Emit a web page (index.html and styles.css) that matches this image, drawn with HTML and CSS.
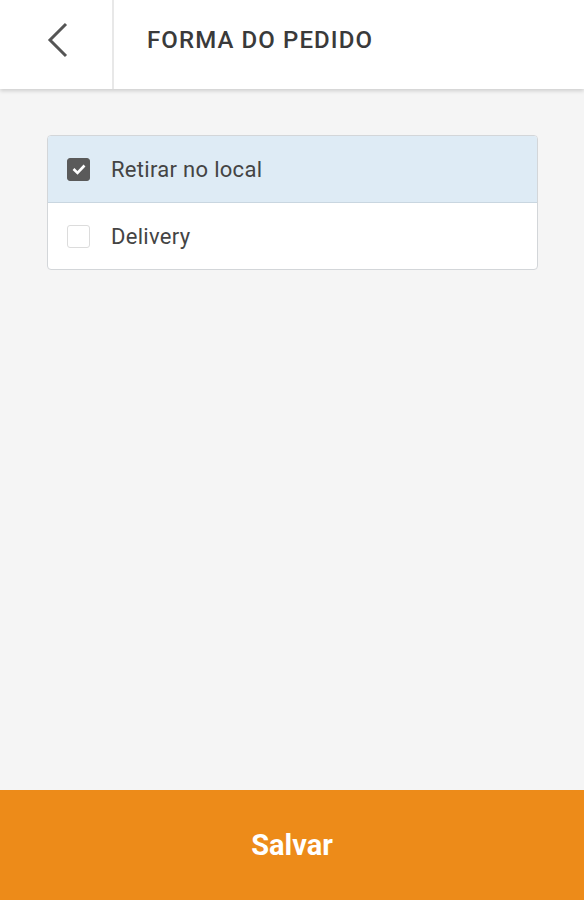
FILE: index.html
```html
<!DOCTYPE html>
<html lang="pt">
<head>
<meta charset="utf-8">
<link rel="stylesheet" href="styles.css">
</head>
<body>
<div class="app">
  <header class="topbar">
    <div class="back">
      <svg width="24" height="36" viewBox="0 0 24 36"><path d="M20 2 L4 18 L20 34" fill="none" stroke="#555" stroke-width="3"/></svg>
    </div>
    <h1 class="title">FORMA DO PEDIDO</h1>
  </header>
  <main class="content">
    <div class="options">
      <label class="option selected">
        <span class="box checked">
          <svg width="14" height="12" viewBox="0 0 14 12"><path d="M1.5 6 L5.5 10 L12.5 2.5" fill="none" stroke="#fff" stroke-width="2.6"/></svg>
        </span>
        <span class="label">Retirar no local</span>
      </label>
      <label class="option">
        <span class="box"></span>
        <span class="label">Delivery</span>
      </label>
    </div>
  </main>
  <footer class="save">Salvar</footer>
</div>
</body>
</html>
```

FILE: styles.css
```css
* { box-sizing: border-box; }
html, body { margin: 0; padding: 0; }
body {
  font-family: Roboto, "Noto Sans", sans-serif;
  background: #f5f5f5;
}
.app {
  height: 900px;
  display: flex;
  flex-direction: column;
}
.topbar {
  height: 89px;
  background: #fff;
  display: flex;
  align-items: stretch;
  box-shadow: 0 2px 4px rgba(0,0,0,0.16);
  position: relative;
  z-index: 1;
  flex-shrink: 0;
}
.back {
  width: 114px;
  border-right: 2px solid #e8e8e8;
  display: flex;
  align-items: center;
  padding-left: 46px;
  padding-bottom: 9px;
}
.title {
  margin: 0 0 0 33px;
  align-self: center;
  padding-bottom: 9px;
  font-size: 24px;
  font-weight: 500;
  color: #3a3a3a;
  letter-spacing: 1.1px;
}
.content {
  flex: 1;
  padding: 46px 46px 0 47px;
}
.options {
  background: #fff;
  border: 1px solid #d3d6d9;
  border-radius: 4px;
  overflow: hidden;
}
.option {
  display: flex;
  align-items: center;
  height: 66px;
  padding-left: 19px;
}
.option.selected {
  background: #deebf5;
  border-bottom: 1px solid #c9d6e0;
  height: 67px;
}
.box {
  width: 23px;
  height: 23px;
  border: 1.5px solid #dcdcdc;
  border-radius: 3px;
  background: #fff;
  display: flex;
  align-items: center;
  justify-content: center;
  margin-right: 21px;
}
.box.checked {
  background: #5a5a5a;
  border-color: #5a5a5a;
}
.label {
  font-size: 22px;
  color: #444;
  letter-spacing: 0.3px;
}
.save {
  height: 110px;
  background: #ed8b19;
  color: #fff;
  font-weight: 700;
  font-size: 29px;
  display: flex;
  align-items: center;
  justify-content: center;
  flex-shrink: 0;
}
```
